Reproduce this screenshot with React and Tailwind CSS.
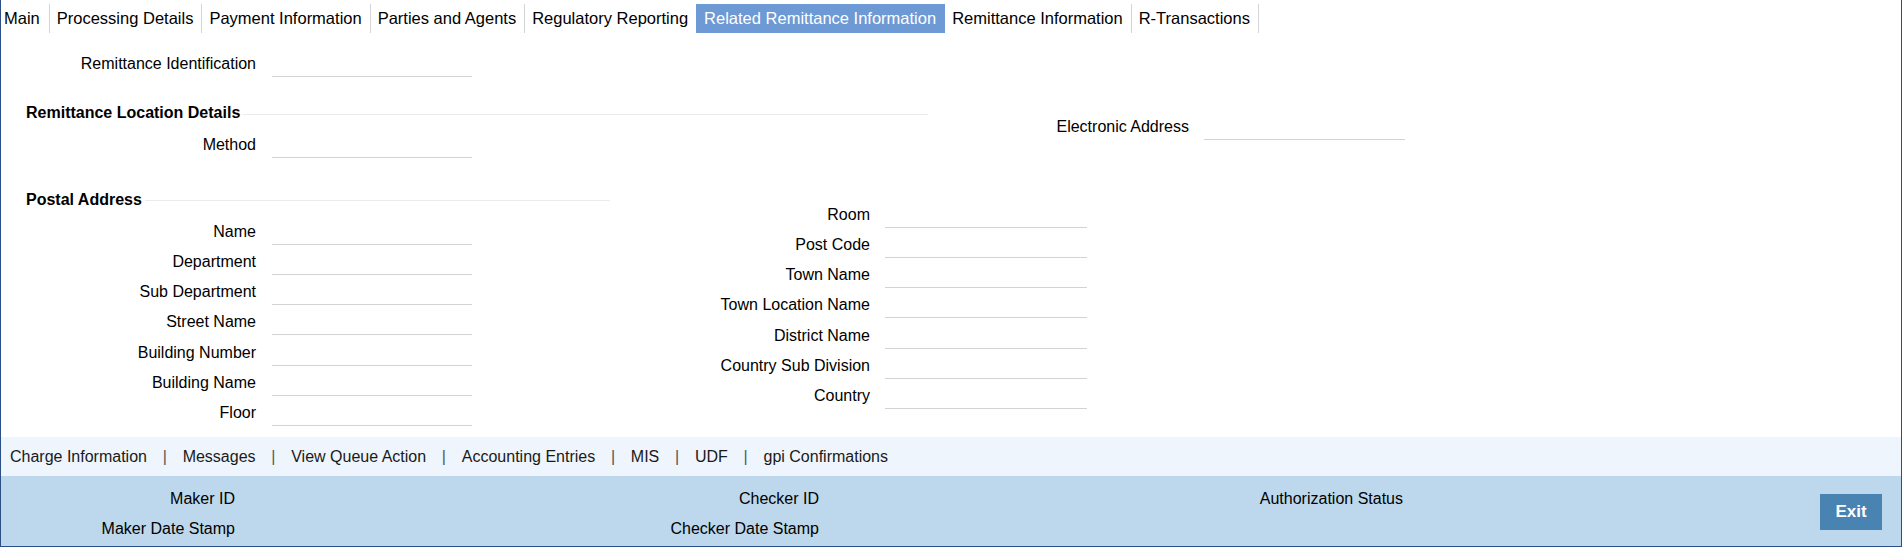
const tabs = [
  "Main",
  "Processing Details",
  "Payment Information",
  "Parties and Agents",
  "Regulatory Reporting",
  "Related Remittance Information",
  "Remittance Information",
  "R-Transactions",
];
const ACTIVE = 5;

function Input({ className = "w-[200px]" }) {
  return <div className={"h-[26px] border-b border-[#d3d3d3] " + className} />;
}

function LeftField({ label }) {
  return (
    <div className="flex h-[30.25px] items-center">
      <div className="w-[255px] text-right whitespace-nowrap">{label}</div>
      <div className="ml-[16px]">
        <Input />
      </div>
    </div>
  );
}

function RightField({ label }) {
  return (
    <div className="flex h-[30.25px] items-center">
      <div className="w-[260px] text-right whitespace-nowrap">{label}</div>
      <div className="ml-[15px]">
        <Input className="w-[202px]" />
      </div>
    </div>
  );
}

function Legend({ title }) {
  return (
    <div className="flex h-[20px] items-center pl-[25px]">
      <span className="font-bold whitespace-nowrap">{title}</span>
      <div className="ml-[3px] mt-[2px] h-px flex-1 bg-[#ebebeb]" />
    </div>
  );
}

const links = [
  "Charge Information",
  "Messages",
  "View Queue Action",
  "Accounting Entries",
  "MIS",
  "UDF",
  "gpi Confirmations",
];

export default function App() {
  return (
    <div className="h-[553px] w-[1903px] bg-white font-['Liberation_Sans',Arial,sans-serif] text-[16px] text-black">
      <div className="flex h-[547px] w-[1902px] flex-col border-b border-l border-r border-[#2d4f88]">
        <div className="flex-1">
          {/* Tabs */}
          <div className="mt-[4px] flex h-[29px]">
            {tabs.map((t, i) => {
              const active = i === ACTIVE;
              const noBorder = active || i === ACTIVE - 1;
              const pad =
                i === 0
                  ? "pl-[3px] pr-[9px]"
                  : active
                  ? "pl-[8px] pr-[9px]"
                  : "pl-[7px] pr-[8px]";
              return (
                <div
                  key={t}
                  className={
                    "h-[29px] whitespace-nowrap text-[16.5px] leading-[29px] " +
                    pad +
                    (active ? " bg-[#6d99d4] text-white" : " text-black") +
                    (noBorder ? "" : " border-r border-[#d4d4d4]")
                  }
                >
                  {t}
                </div>
              );
            })}
          </div>

          {/* Remittance Identification */}
          <div className="mt-[16px]">
            <LeftField label="Remittance Identification" />
          </div>

          {/* Remittance Location Details */}
          <div className="mt-[24px] flex">
            <div className="w-[927px]">
              <Legend title="Remittance Location Details" />
              <div className="mt-[7px]">
                <LeftField label="Method" />
              </div>
            </div>
            <div className="pt-[9px]">
              <div className="flex h-[30px] items-center">
                <div className="w-[261px] text-right whitespace-nowrap">Electronic Address</div>
                <div className="ml-[15px]">
                  <Input className="w-[201px]" />
                </div>
              </div>
            </div>
          </div>

          {/* Postal Address */}
          <div className="mt-[29px] flex">
            <div className="w-[609px]">
              <Legend title="Postal Address" />
              <div className="mt-[7px] flex flex-col">
                {[
                  "Name",
                  "Department",
                  "Sub Department",
                  "Street Name",
                  "Building Number",
                  "Building Name",
                  "Floor",
                ].map((l) => (
                  <LeftField key={l} label={l} />
                ))}
              </div>
            </div>
            <div className="pt-[10px]">
              {[
                "Room",
                "Post Code",
                "Town Name",
                "Town Location Name",
                "District Name",
                "Country Sub Division",
                "Country",
              ].map((l) => (
                <RightField key={l} label={l} />
              ))}
            </div>
          </div>
        </div>

        {/* Footer links */}
        <div className="flex h-[39px] items-center bg-[#eef5fc] pl-[9px] text-[#1a1a1a]">
          {links.map((l, i) => (
            <div key={l} className="flex items-center whitespace-nowrap">
              {i > 0 && <span className="mx-[15.75px] text-[#555]">|</span>}
              <span>{l}</span>
            </div>
          ))}
        </div>

        {/* Audit band */}
        <div className="flex h-[70px] bg-[#bdd8ec] pt-[8px]">
          <div className="flex w-[234px] flex-col text-right">
            <div className="h-[30px] leading-[30px]">Maker ID</div>
            <div className="h-[30px] leading-[30px]">Maker Date Stamp</div>
          </div>
          <div className="ml-[344px] flex w-[240px] flex-col text-right">
            <div className="h-[30px] leading-[30px]">Checker ID</div>
            <div className="h-[30px] leading-[30px]">Checker Date Stamp</div>
          </div>
          <div className="ml-[344px] flex w-[240px] flex-col text-right">
            <div className="h-[30px] leading-[30px]">Authorization Status</div>
          </div>
          <div className="ml-auto mr-[19px] mt-[10px]">
            <button className="h-[36px] w-[62px] bg-[#4883b2] text-[17px] font-bold text-white">
              Exit
            </button>
          </div>
        </div>
      </div>
    </div>
  );
}
